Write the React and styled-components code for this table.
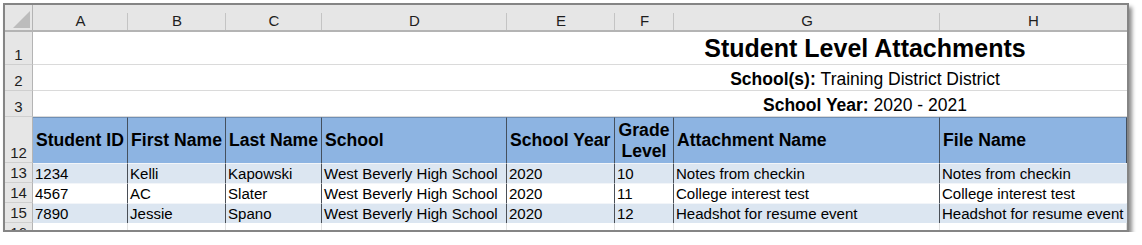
import React from "react"
import styled, { createGlobalStyle } from "styled-components"

const GlobalStyle = createGlobalStyle`
  body {
    margin: 0;
    background: #ffffff;
    font-family: "Liberation Sans", Arial, sans-serif;
  }
`

const Frame = styled.div`
  margin: 3px 0 0 3px;
  width: 1122px;
  height: 225px;
  border: 2px solid #858585;
  box-shadow: 3px 4px 4px rgba(0, 0, 0, 0.45);
  overflow: hidden;
  background: #ffffff;
`

const Sheet = styled.div`
  display: grid;
  grid-template-columns: 28px 95px 98px 96px 185px 108px 59px 266px 187px;
  grid-template-rows: 27px 33px 26px 26px 46px 20px 20px 20px 20px;
`

const Corner = styled.div`
  position: relative;
  background: #e6e6e6;
  border-right: 1px solid #b4b4b4;
  border-bottom: 2px solid #b4b4b4;
  &::after {
    content: "";
    position: absolute;
    right: 2px;
    bottom: 2px;
    border-style: solid;
    border-width: 0 0 17px 17px;
    border-color: transparent transparent #bcbcbc transparent;
  }
`

const ColHead = styled.div`
  position: relative;
  background: #e6e6e6;
  border-bottom: 2px solid #b4b4b4;
  display: flex;
  align-items: center;
  justify-content: center;
  padding-top: 6px;
  font-size: 15px;
  color: #1e1e1e;
  &::after {
    content: "";
    position: absolute;
    right: 0;
    top: 8px;
    bottom: 0;
    width: 1px;
    background: ${p => (p.$last ? "transparent" : "#c4c4c4")};
  }
`

const RowHead = styled.div`
  background: #e6e6e6;
  border-right: 1px solid #b4b4b4;
  border-bottom: 1px solid #cfcfcf;
  display: flex;
  align-items: flex-end;
  justify-content: center;
  padding-bottom: 1px;
  font-size: 15px;
  color: #1e1e1e;
  line-height: 17px;
`

const Blank = styled.div`
  grid-column: ${p => p.$span};
  background: #ffffff;
  border-bottom: 1px solid #dadada;
`

const Banner = styled.div`
  grid-column: 7 / 10;
  background: #ffffff;
  border-bottom: 1px solid #dadada;
  display: flex;
  align-items: ${p => (p.$title ? "center" : "flex-end")};
  justify-content: center;
  padding-right: 12px;
  padding-bottom: ${p => (p.$title ? "0" : "1px")};
  font-size: ${p => (p.$title ? "25px" : "17.5px")};
  line-height: ${p => (p.$title ? "30px" : "20px")};
  font-weight: ${p => (p.$title ? 700 : 400)};
  color: #000000;
  white-space: nowrap;
  b {
    font-weight: 700;
  }
`

const HeadCell = styled.div`
  background: #8db4e2;
  border-top: 1px solid #6f8fb5;
  border-right: 1px solid #44505e;
  display: flex;
  align-items: center;
  justify-content: ${p => (p.$center ? "center" : "flex-start")};
  text-align: ${p => (p.$center ? "center" : "left")};
  padding-left: ${p => (p.$center ? "0" : "3px")};
  font-size: 17.6px;
  line-height: 21px;
  font-weight: 700;
  color: #000000;
  white-space: nowrap;
  &:last-child {
    border-right: none;
  }
`

const DataCell = styled.div`
  background: ${p => (p.$shade ? "#dce6f1" : "#ffffff")};
  border-right: 1px solid ${p => (p.$last ? "transparent" : "#4a4f57")};
  border-top: 1px solid #f2f5f9;
  display: flex;
  align-items: center;
  padding-left: 2px;
  font-size: 15.05px;
  color: #000000;
  white-space: nowrap;
  overflow: hidden;
`

const EmptyCell = styled.div`
  background: #ffffff;
  border-right: 1px solid #e0e0e0;
`

const letters = ["A", "B", "C", "D", "E", "F", "G", "H"]

const headers = [
  "Student ID",
  "First Name",
  "Last Name",
  "School",
  "School Year",
  "Grade\nLevel",
  "Attachment Name",
  "File Name",
]

const rows = [
  { n: 13, cells: ["1234", "Kelli", "Kapowski", "West Beverly High School", "2020", "10", "Notes from checkin", "Notes from checkin"] },
  { n: 14, cells: ["4567", "AC", "Slater", "West Beverly High School", "2020", "11", "College interest test", "College interest test"] },
  { n: 15, cells: ["7890", "Jessie", "Spano", "West Beverly High School", "2020", "12", "Headshot for resume event", "Headshot for resume event"] },
]

export default function App() {
  return (
    <>
      <GlobalStyle />
      <Frame>
        <Sheet>
          <Corner />
          {letters.map((l, i) => (
            <ColHead key={l} $last={i === letters.length - 1}>{l}</ColHead>
          ))}

          <RowHead>1</RowHead>
          <Blank $span="2 / 7" />
          <Banner $title>Student Level Attachments</Banner>

          <RowHead>2</RowHead>
          <Blank $span="2 / 7" />
          <Banner><b>School(s):</b>&nbsp;Training District District</Banner>

          <RowHead>3</RowHead>
          <Blank $span="2 / 7" />
          <Banner><b>School Year:</b>&nbsp;2020 - 2021</Banner>

          <RowHead>12</RowHead>
          {headers.map((h, i) => (
            <HeadCell key={h} $center={i === 5}>
              {h.includes("\n") ? (
                <span>Grade<br />Level</span>
              ) : h}
            </HeadCell>
          ))}

          {rows.map(r => (
            <React.Fragment key={r.n}>
              <RowHead>{r.n}</RowHead>
              {r.cells.map((c, i) => (
                <DataCell key={i} $shade={r.n % 2 === 1} $last={i === 7}>{c}</DataCell>
              ))}
            </React.Fragment>
          ))}

          <RowHead>16</RowHead>
          {letters.map(l => (
            <EmptyCell key={l} />
          ))}
        </Sheet>
      </Frame>
    </>
  )
}
